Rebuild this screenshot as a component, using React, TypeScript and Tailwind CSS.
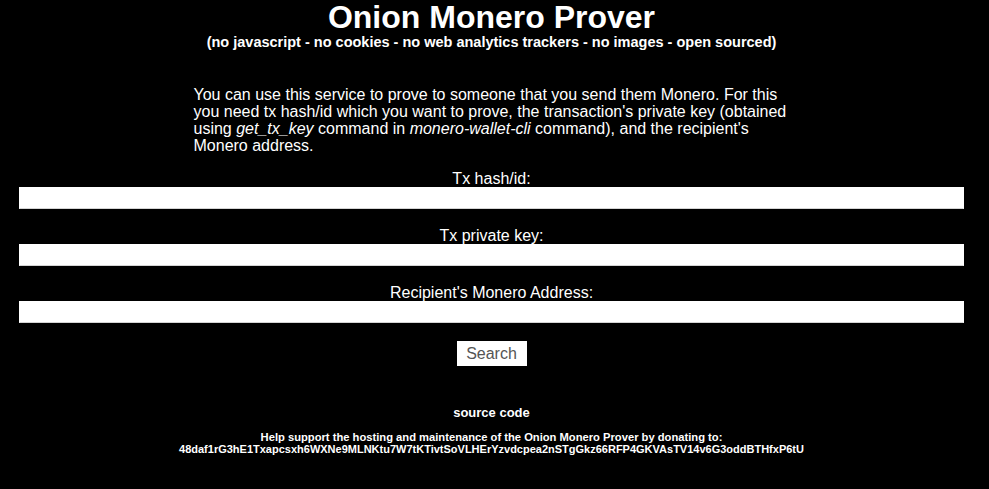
const fields = ["Tx hash/id:", "Tx private key:", "Recipient's Monero Address:"];

function Field({ label }: { label: string }) {
  return (
    <div className="flex flex-col items-center">
      <label className="text-[16px] leading-[17px]">{label}</label>
      <input
        type="text"
        className="w-[945px] h-[22px] bg-white border border-[#d4d4d4] border-t-white border-x-white text-black outline-none"
      />
    </div>
  );
}

export default function App() {
  return (
    <div className="min-h-[489px] w-[989px] bg-black text-white font-['Liberation_Sans',Arial,sans-serif]">
      <div className="w-[983px] flex flex-col items-center">
        <h1 className="text-[32px] leading-[34px] font-bold">Onion Monero Prover</h1>
        <p className="text-[14.5px] leading-[16px] font-bold">
          (no javascript - no cookies - no web analytics trackers - no images - open sourced)
        </p>
        <p className="w-[600px] text-[16px] leading-[17px] mt-[36px] ml-[4px]">
          You can use this service to prove to someone that you send them Monero. For this you need tx
          hash/id which you want to prove, the transaction's private key (obtained using <i>get_tx_key</i>{" "}
          command in <i>monero-wallet-cli</i> command), and the recipient's Monero address.
        </p>
        <div className="flex flex-col gap-[18px] mt-[16px]">
          {fields.map((f) => (
            <Field key={f} label={f} />
          ))}
        </div>
        <button className="mt-[18px] w-[70px] h-[25px] bg-white text-[#555] text-[16px] leading-[18px]">
          Search
        </button>
        <p className="mt-[39px] text-[13px] leading-[15px] font-bold">source code</p>
        <p className="mt-[11px] text-[11px] leading-[12px] font-bold text-center">
          <span className="text-[11.2px]">
            Help support the hosting and maintenance of the Onion Monero Prover by donating to:
          </span>
          <br />
          48daf1rG3hE1Txapcsxh6WXNe9MLNKtu7W7tKTivtSoVLHErYzvdcpea2nSTgGkz66RFP4GKVAsTV14v6G3oddBTHfxP6tU
        </p>
      </div>
    </div>
  );
}
